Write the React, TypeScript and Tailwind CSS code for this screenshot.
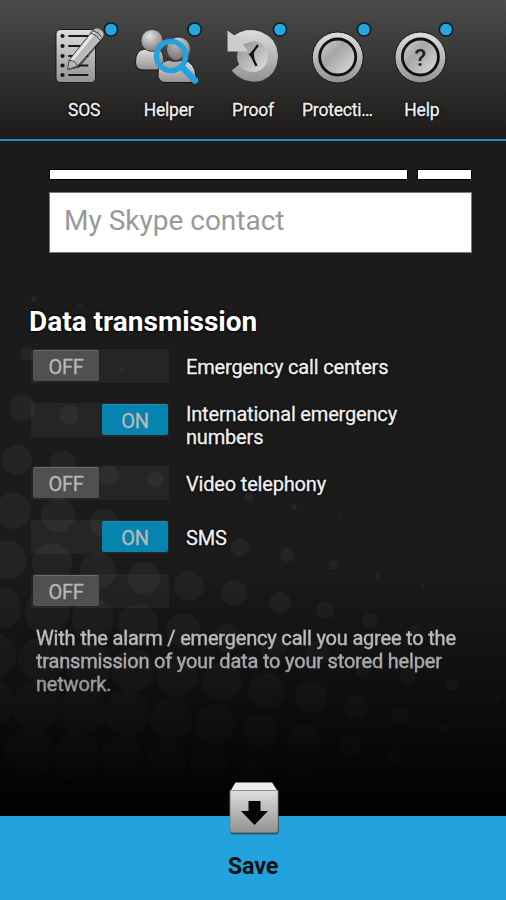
import type { ReactNode } from "react";

const font = "font-['Roboto','Liberation_Sans',sans-serif]";
const glow = "[text-shadow:0_0_2px_#000,0_0_3px_#000]";
const stroke = "[-webkit-text-stroke:0.3px_currentColor]";

// Halftone backdrop: x, y, radius
const dots: number[][] = [
  [34, 299, 3], [80, 305, 2], [27, 354, 7], [22, 408, 13], [17, 460, 15], [13, 511, 18], [7, 560, 19.5], [0, 608, 21], [-5, 655, 22], [-9, 702, 24],
  [122, 369, 2], [69, 415, 10], [63, 464, 13], [58, 515, 17], [52, 563, 20], [47, 612, 22], [41, 660, 23], [36, 706, 25], [30, 752, 25],
  [109, 475, 10], [104, 523, 14], [98, 571, 18], [93, 619, 21], [88, 665, 23], [83, 711, 24], [77, 757, 24],
  [155, 479, 8], [144, 578, 16], [138, 624, 20], [133, 670, 22], [127, 714, 23], [122, 758, 22],
  [189, 586, 15], [183, 630, 17], [177, 676, 21], [171, 719, 21], [166, 762, 21],
  [240, 547, 9], [234, 593, 13], [228, 638, 14], [222, 682, 19.5], [215, 725, 20], [209, 765, 19],
  [249, 497, 5], [287, 555, 7], [280, 603, 11], [273, 648, 13], [266, 691, 18], [260, 731, 17], [252, 770, 14],
  [294, 507, 3], [333, 565, 5], [325, 610, 9], [318, 653, 12], [311, 697, 16], [304, 737, 15], [297, 775, 11],
  [340, 517, 1.5], [378, 576, 3.5], [370, 620, 7.5], [363, 668, 9], [356, 707, 12.5], [350, 746, 11],
  [423, 586, 2], [415, 630, 5], [408, 677, 8], [400, 716, 9], [393, 757, 7],
  [452, 685, 6], [446, 728, 5], [498, 697, 3],
];

function Backdrop() {
  return (
    <svg className="absolute inset-0 h-full w-full" viewBox="0 0 506 900" aria-hidden="true">
      <defs>
        <linearGradient id="fade" x1="0" y1="560" x2="0" y2="790" gradientUnits="userSpaceOnUse">
          <stop offset="0" stopColor="#000" stopOpacity="0" />
          <stop offset="0.5" stopColor="#000" stopOpacity="0.4" />
          <stop offset="1" stopColor="#000" stopOpacity="0.88" />
        </linearGradient>
      </defs>
      <g fill="#242424">
        {dots.map(([x, y, r]) => <circle key={`${x}-${y}`} cx={x} cy={y} r={r} />)}
      </g>
      <rect y="560" width="506" height="340" fill="url(#fade)" />
    </svg>
  );
}

function IconDefs() {
  return (
    <svg className="absolute h-0 w-0" aria-hidden="true">
      <defs>
        <linearGradient id="metal" x1="0" y1="0" x2="0" y2="1">
          <stop offset="0" stopColor="#dedede" />
          <stop offset="1" stopColor="#929292" />
        </linearGradient>
        <linearGradient id="shine" x1="0" y1="0" x2="1" y2="1">
          <stop offset="0" stopColor="#8d8d8d" />
          <stop offset="1" stopColor="#e2e2e2" />
        </linearGradient>
        <linearGradient id="disc" x1="0" y1="0" x2="1" y2="1">
          <stop offset="0" stopColor="#d0d0d0" />
          <stop offset="0.4" stopColor="#a6a6a6" />
          <stop offset="1" stopColor="#e0e0e0" />
        </linearGradient>
        <radialGradient id="ball" cx="0.4" cy="0.3" r="0.75">
          <stop offset="0" stopColor="#e2e2e2" />
          <stop offset="1" stopColor="#777" />
        </radialGradient>
      </defs>
    </svg>
  );
}

function Sos() {
  return (
    <>
      <rect x="14" y="29.5" width="39.5" height="53" rx="4" fill="url(#metal)" stroke="#171717" />
      {[36, 46, 56, 65.5, 75].map((y) => (
        <g key={y} fill="#181818">
          <circle cx="20.5" cy={y} r="2.1" />
          <rect x="26" y={y - 1.1} width="20.5" height="2.2" rx="1" />
        </g>
      ))}
      <path d="M26 70 28 60 53 30 62 38 37 68Z" fill="#181818" opacity=".55" />
      <path d="M25.5 69.500 27 60.500 51 30Q54 26 59 29.500T61 37.500L35.500 66Z" fill="url(#shine)" stroke="#333" strokeWidth=".8" />
      <path d="M29.500 60.500 52.500 32.500" stroke="#e6e6e6" strokeWidth="3" />
      <path d="M27 60.500Q33 60 35.500 66M48.500 33Q55 34.500 58 40M50.500 30.500Q57 32 60 37.500" fill="none" stroke="#444" strokeWidth="1" />
    </>
  );
}

function Helper() {
  return (
    <>
      <path d="M9.500 63Q9 50 19 49H31Q38 50 38 62Q38 70 32 70H17Q10 70 9.500 63Z" fill="url(#metal)" stroke="#111" />
      <circle cx="26" cy="40.500" r="11" fill="url(#ball)" stroke="#222" strokeWidth=".7" />
      <path d="M32 76Q31 62 43 60H57Q69 62 70 76Q69 82.500 63 82.500H39Q33 82 32 76Z" fill="url(#metal)" stroke="#111" />
      <circle cx="52.500" cy="49" r="12" fill="url(#ball)" stroke="#222" strokeWidth=".7" />
      <circle cx="45" cy="56" r="14" fill="#555" opacity=".3" />
      <path d="M37 55Q48 66 58 57" fill="none" stroke="#333" strokeWidth="2" opacity=".8" />
      <circle cx="45" cy="56" r="14.600" fill="none" stroke="#22a3df" strokeWidth="5.400" />
      <path d="M56 67 69 80.500" stroke="#22a3df" strokeWidth="6.500" strokeLinecap="round" />
    </>
  );
}

function Proof() {
  return (
    <>
      <path d="M16.500 30.500 23 35Q35 26.500 49 31Q67 38 67.500 56Q67 75 50 81.500Q32 85 20 70.500L27.500 64.500 36 51.500H16.500Z" fill="url(#metal)" stroke="#222" strokeWidth=".8" />
      <circle cx="41.500" cy="56.500" r="15.500" fill="url(#shine)" />
      <path d="M16.500 30.500 24 36 44 41 32 44 37 51.500H16.500Z" fill="#ccc" />
      <path d="M47 45 40 54.500 45.500 66" fill="none" stroke="#151515" strokeWidth="2.300" />
      <path d="M37.500 54.500 42.500 50 43.500 60Z" fill="#151515" />
    </>
  );
}

function Disc({ cx }: { cx: number }) {
  return (
    <>
      <circle cx={cx} cy="57.500" r="25.500" fill="url(#metal)" stroke="#151515" strokeWidth="1" />
      <circle cx={cx} cy="57" r="18" fill="url(#disc)" stroke="#111" strokeWidth="2.800" />
    </>
  );
}

function Tab({ label, dot, children }: { label: string; dot: number; children: ReactNode }) {
  return (
    <div className="flex flex-1 flex-col items-center">
      <svg className="h-24 w-full" viewBox="0 0 84.4 96" aria-hidden="true">
        {children}
        <circle cx={dot} cy="29.500" r="6.600" fill="#22a7e3" stroke="#10181c" strokeWidth="1.500" />
      </svg>
      <span className={`text-[17.500px] leading-7 tracking-[-0.2px] text-[#f0f0f0] ${glow} ${stroke}`}>{label}</span>
    </div>
  );
}

function Row({ on, label, height }: { on?: boolean; label?: string; height: string }) {
  return (
    <div className={`flex items-start ${height}`}>
      <div className={`flex h-[34px] w-[138px] shrink-0 bg-[#ffffff0c] pt-px ${on ? "justify-end pr-px" : "pl-0.5"}`}>
        <div className={`flex h-[31px] w-[66px] items-center justify-center rounded-xs border-t pt-0.5 text-xl tracking-[-0.3px] text-[#b8b8b8] ${on ? "border-[#208eae] bg-[#0783b0]" : "border-[#6e6e6e] bg-[#505050]"} ${stroke}`}>
          {on ? "ON" : "OFF"}
        </div>
      </div>
      <div className={`ml-[17px] flex min-h-9 w-60 items-center text-xl leading-[23px] tracking-[-0.18px] text-[#f0f0f0] ${glow} ${stroke}`}>{label}</div>
    </div>
  );
}

export default function App() {
  return (
    <main className={`relative h-[900px] w-[506px] overflow-hidden bg-[#1b1b1b] ${font}`}>
      <Backdrop />
      <IconDefs />
      <div className="relative flex h-full flex-col">
        <header className="flex h-[141px] shrink-0 border-b-2 border-[#258cb5] bg-linear-to-b from-[#4c4c4c] to-[#1c1b1a] px-[42px]">
          <Tab label="SOS" dot={69}><Sos /></Tab>
          <Tab label="Helper" dot={68.6}><Helper /></Tab>
          <Tab label="Proof" dot={69}><Proof /></Tab>
          <Tab label="Protecti…" dot={69}><Disc cx={42.7} /></Tab>
          <Tab label="Help" dot={66}>
            <Disc cx={40.4} />
            <text x="40.400" y="65.500" textAnchor="middle" fontSize="24" fontWeight="500" fill="#222">?</text>
          </Tab>
        </header>

        <section className="ml-[49px] mt-7 w-[423px]">
          <div className="flex h-[11px] gap-[9px]">
            <div className="w-[359px] border border-black bg-white" />
            <div className="flex-1 border border-black bg-white" />
          </div>
          <div className="mt-3 flex h-[61px] items-center border border-[#777] bg-white pb-1 pl-3.5 text-[28px] text-[#999]">
            My Skype contact
          </div>
        </section>

        <section className="ml-[29px] mt-[51px]">
          <h1 className={`h-[45px] text-[28px] font-bold leading-9 text-white ${glow}`}>Data transmission</h1>
          <div className="ml-0.5">
            <Row label="Emergency call centers" height="h-[54px]" />
            <Row on label="International emergency numbers" height="h-[63px]" />
            <Row label="Video telephony" height="h-[54px]" />
            <Row on label="SMS" height="h-[54px]" />
            <Row height="h-[53px]" />
          </div>
          <p className={`ml-[7px] w-[430px] bg-linear-to-b from-[#cfcfcf] to-[#888] bg-clip-text text-xl leading-[23px] tracking-[-0.19px] text-transparent [-webkit-text-stroke:0.3px_#a8a8a8]`}>
            With the alarm / emergency call you agree to the transmission of your data to your stored helper network.
          </p>
        </section>

        <footer className="mt-auto flex h-[119px] shrink-0 flex-col items-center bg-linear-to-b from-transparent from-[35px] to-[#22a3de] to-[35px]">
          <svg className="ml-0.5 h-14 w-14 shrink-0" viewBox="0 0 56 56" aria-hidden="true">
            <path d="M4 10 9 1H47L53 10V50Q53 53.500 49 53.500H8Q4 53.500 4 50Z" fill="#222" opacity=".6" />
            <path d="M4.500 10 9.500 1.500H46L51.500 10Z" fill="#eee" />
            <path d="M4 9.500H52V49Q52 51.500 49.500 51.500H6.500Q4 51.500 4 49Z" fill="url(#metal)" stroke="#777" strokeWidth=".8" />
            <path d="M22.500 20H34.500V30H42L28.500 44 15 30H22.500Z" fill="#050505" />
          </svg>
          <span className="mt-[11px] text-[23.500px] font-bold leading-9 tracking-[-0.2px] text-[#071217]">Save</span>
        </footer>
      </div>
    </main>
  );
}
